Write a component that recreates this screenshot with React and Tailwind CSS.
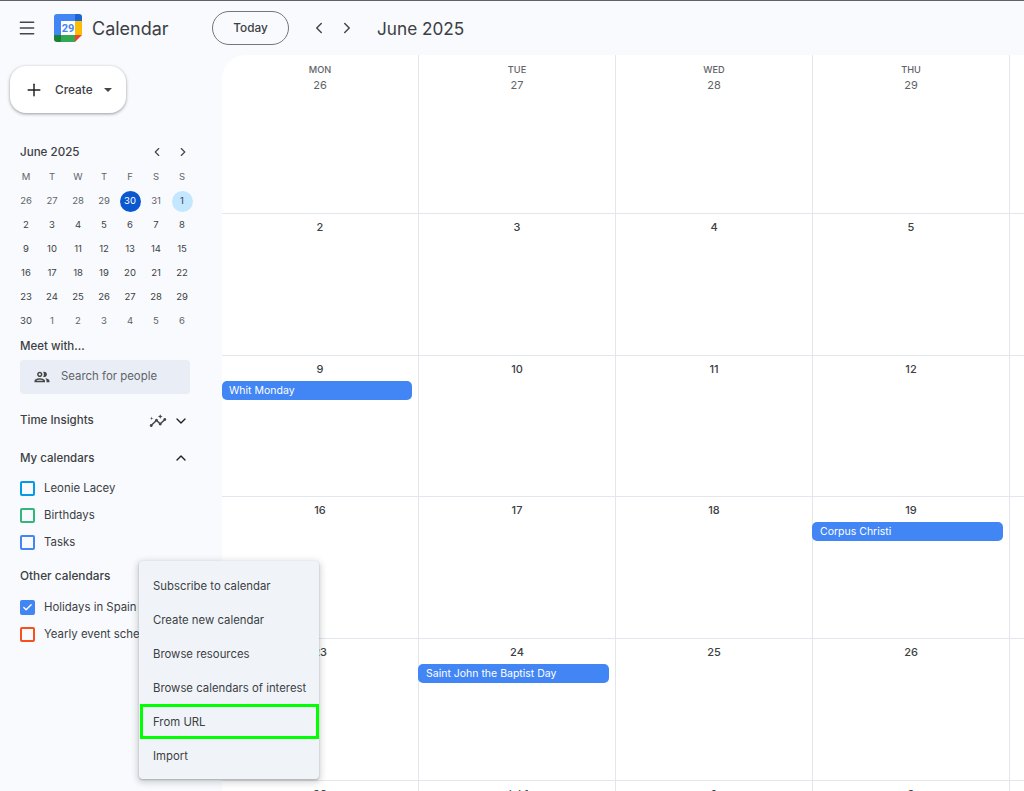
import { ChevronLeft, ChevronRight, ChevronDown, ChevronUp, Menu, Plus, Check } from 'lucide-react';

const miniDays = [
  ['26', '27', '28', '29', '30', '31', '1'],
  ['2', '3', '4', '5', '6', '7', '8'],
  ['9', '10', '11', '12', '13', '14', '15'],
  ['16', '17', '18', '19', '20', '21', '22'],
  ['23', '24', '25', '26', '27', '28', '29'],
  ['30', '1', '2', '3', '4', '5', '6'],
];

// the friday column only starts at the right edge, nothing of its text shows
const weeks = [
  [{ n: '26', head: 'MON' }, { n: '27', head: 'TUE' }, { n: '28', head: 'WED' }, { n: '29', head: 'THU' }, {}],
  [{ n: '2' }, { n: '3' }, { n: '4' }, { n: '5' }, {}],
  [{ n: '9', event: 'Whit Monday' }, { n: '10' }, { n: '11' }, { n: '12' }, {}],
  [{ n: '16' }, { n: '17' }, { n: '18' }, { n: '19', event: 'Corpus Christi' }, {}],
  [{ n: '23' }, { n: '24', event: 'Saint John the Baptist Day' }, { n: '25' }, { n: '26' }, {}],
  [{ n: '30' }, { n: 'Jul 1' }, { n: '2' }, { n: '3' }, {}],
];

const rowHeights = ['h-[159px]', 'h-[142px]', 'h-[141px]', 'h-[142px]', 'h-[142px]', 'h-[142px]'];

const menuItems = ['Subscribe to calendar', 'Create new calendar', 'Browse resources', 'Browse calendars of interest', 'From URL', 'Import'];

function Logo() {
  return (
    <svg width="28" height="28" viewBox="0 0 28 28">
      <path d="M3 0h18v7H7v14H0V3a3 3 0 0 1 3-3z" fill="#4285f4" />
      <path d="M21 0h4a3 3 0 0 1 3 3v4h-7z" fill="#1967d2" />
      <rect x="21" y="7" width="7" height="14" fill="#fbbc04" />
      <rect x="7" y="21" width="14" height="7" fill="#34a853" />
      <path d="M0 21h7v7H3a3 3 0 0 1-3-3z" fill="#188038" />
      <path d="M21 21h7l-7 7z" fill="#ea4335" />
      <rect x="7" y="7" width="14" height="14" fill="#fff" />
      <text x="14" y="18" textAnchor="middle" fontSize="11" fontWeight="700" fill="#4285f4" fontFamily="Roboto, sans-serif">29</text>
    </svg>
  );
}

function PeopleIcon() {
  return (
    <svg width="18" height="18" viewBox="0 0 24 24" fill="#444746">
      <path d="M9 13.75c-2.34 0-7 1.17-7 3.5V19h14v-1.750c0-2.330-4.660-3.500-7-3.500zM4.340 17c.84-.58 2.870-1.250 4.660-1.250s3.820.67 4.660 1.250H4.340zM9 12c1.930 0 3.500-1.570 3.500-3.500S10.930 5 9 5 5.500 6.570 5.500 8.500 7.070 12 9 12zm0-5c.83 0 1.500.67 1.500 1.500S9.830 10 9 10s-1.500-.67-1.500-1.500S8.170 7 9 7zm7.040 6.810c1.160.84 1.960 1.960 1.960 3.440V19h4v-1.750c0-2.020-3.500-3.170-5.960-3.440zM15 12c1.930 0 3.500-1.570 3.500-3.500S16.930 5 15 5c-.54 0-1.040.13-1.500.35.630.89 1 1.980 1 3.150s-.37 2.260-1 3.150c.46.22.96.35 1.500.35z" />
    </svg>
  );
}

function InsightsIcon() {
  return (
    <svg width="18" height="18" viewBox="0 0 24 24" fill="#444746">
      <path d="M21 8c-1.450 0-2.260 1.440-1.930 2.510l-3.550 3.560c-.3-.09-.74-.09-1.040 0l-2.550-2.550C12.270 10.450 11.460 9 10 9c-1.450 0-2.270 1.440-1.930 2.520l-4.560 4.550C2.440 15.740 1 16.550 1 18c0 1.100.9 2 2 2 1.450 0 2.260-1.440 1.930-2.510l4.550-4.560c.3.09.74.09 1.040 0l2.550 2.550C12.730 16.550 13.540 18 15 18c1.450 0 2.270-1.440 1.930-2.520l3.560-3.550c1.070.33 2.510-.48 2.510-1.930 0-1.100-.9-2-2-2z" />
      <path d="m15 9 .94-2.070L18 6l-2.060-.93L15 3l-.92 2.070L12 6l2.080.93zM3.500 11 4 9l2-.5L4 8l-.5-2L3 8l-2 .5L3 9z" />
    </svg>
  );
}

function CalendarRow({ label, border, checked }) {
  return (
    <div className="flex items-center h-[27px] pl-5">
      {checked ? (
        <span className="w-[15px] h-[15px] rounded-[2px] flex items-center justify-center bg-[#4285f4]">
          <Check size={11} color="#fff" strokeWidth={3} />
        </span>
      ) : (
        <span className={`w-[15px] h-[15px] rounded-[2px] border-2 ${border}`} />
      )}
      <span className="ml-[9px] text-[11.4px] text-[#3c4043] whitespace-nowrap">{label}</span>
    </div>
  );
}

function Sidebar() {
  return (
    <aside className="w-[222px] shrink-0 pt-[11px]">
      <button className="ml-[10px] w-[116px] h-[47px] bg-white rounded-2xl shadow-[0_1px_3px_1px_rgba(60,64,67,0.2),0_1px_2px_rgba(60,64,67,0.25)] flex items-center pl-[14px]">
        <Plus size={20} color="#1f1f1f" strokeWidth={1.75} />
        <span className="ml-[11px] pt-[2px] text-[11.8px] font-medium text-[#3c4043]">Create</span>
        <span className="ml-[11px] w-0 h-0 border-x-[4px] border-x-transparent border-t-[4px] border-t-[#444746]" />
      </button>

      <div className="mt-[28px] pl-5 pr-[32px] flex items-center justify-between h-[22px]">
        <span className="pt-px text-[11.6px] font-medium text-[#3c4043]">June 2025</span>
        <div className="flex items-center gap-[12px]">
          <ChevronLeft size={14} color="#444746" />
          <ChevronRight size={14} color="#444746" />
        </div>
      </div>

      <div className="mt-[2px] ml-[13px] w-[182px] grid grid-cols-7 text-[9.5px] text-[#3c4043]">
        {['M', 'T', 'W', 'T', 'F', 'S', 'S'].map((d, i) => (
          <div key={i} className="h-[24px] flex items-center justify-center text-[#5f6368]">{d}</div>
        ))}
        {miniDays.flat().map((d, i) => {
          // first row up to may 31 and the july days at the end are other months
          const otherMonth = i < 6 || i > 35;
          return (
            <div key={i} className={`h-[24px] flex items-center justify-center ${otherMonth ? 'text-[#5f6368]' : ''}`}>
              {i === 4 ? (
                <span className="w-[21px] h-[21px] rounded-full bg-[#0b57d0] text-white flex items-center justify-center">{d}</span>
              ) : i === 6 ? (
                <span className="w-[21px] h-[21px] rounded-full bg-[#c2e7ff] flex items-center justify-center">{d}</span>
              ) : (
                d
              )}
            </div>
          );
        })}
      </div>

      <div className="pl-5 mt-[5px] text-[11.5px] font-medium text-[#3c4043] h-[16px] leading-[16px]">Meet with...</div>
      <div className="ml-5 mt-[6px] w-[170px] h-[34px] bg-[#e9eef6] rounded-[4px] flex items-center pl-[13px]">
        <PeopleIcon />
        <span className="ml-[10px] text-[11.4px] text-[#5f6368]">Search for people</span>
      </div>

      <div className="mt-[16px] pl-5 pr-[33px] h-[22px] flex items-center justify-between">
        <span className="text-[11.5px] font-medium text-[#3c4043]">Time Insights</span>
        <div className="flex items-center gap-[6px]">
          <InsightsIcon />
          <ChevronDown size={16} color="#1f1f1f" />
        </div>
      </div>

      <div className="mt-[15px] pl-5 pr-[33px] h-[22px] flex items-center justify-between">
        <span className="pt-px text-[11.5px] font-medium text-[#3c4043]">My calendars</span>
        <ChevronUp size={16} color="#1f1f1f" />
      </div>

      <div className="mt-[6px]">
        <CalendarRow label="Leonie Lacey" border="border-[#039be5]" />
        <CalendarRow label="Birthdays" border="border-[#33b679]" />
        <CalendarRow label="Tasks" border="border-[#4285f4]" />
      </div>

      <div className="mt-[10px] pl-5 h-[22px] flex items-center text-[11.8px] font-medium text-[#3c4043]">Other calendars</div>

      <div className="mt-[6px]">
        <CalendarRow label="Holidays in Spain" checked />
        <CalendarRow label="Yearly event schedule" border="border-[#f4511e]" />
      </div>
    </aside>
  );
}

function DayCell({ day, height, first, muted }) {
  return (
    <div className={`w-[197px] shrink-0 border-r border-b border-[#e3e7ed] ${height} text-center`}>
      {day.head && <div className="pt-[8px] text-[9.2px] leading-[14px] font-medium text-[#5f6368]">{day.head}</div>}
      {day.n && (
        <div className={`text-[11px] leading-[16px] ${muted ? 'text-[#5f6368]' : 'font-medium text-[#3c4043]'} ${day.head ? '' : 'pt-[5px]'}`}>{day.n}</div>
      )}
      {day.event && (
        <div className={`mt-[4px] h-[19px] rounded-[5px] bg-[#4285f4] text-white text-[10.5px] leading-[19px] text-left pl-[7px] ${first ? 'w-[190px]' : 'w-[191px] -ml-px pl-[8px]'}`}>
          {day.event}
        </div>
      )}
    </div>
  );
}

function ContextMenu() {
  return (
    <div className="absolute left-[139px] top-[560px] w-[180px] h-[218px] bg-[#f0f4f9] rounded-[4px] shadow-[0_2px_6px_2px_rgba(60,64,67,0.2),0_1px_2px_rgba(60,64,67,0.3)] pt-[8px]">
      {menuItems.map((item) => (
        <div key={item} className="relative h-[34px] pt-[2px] flex items-center pl-[14px] text-[11.35px] text-[#3c4043] whitespace-nowrap">
          {item}
          {item === 'From URL' && <div className="absolute left-px right-0 -top-px bottom-0 border-[3px] border-[#00ff00]" />}
        </div>
      ))}
    </div>
  );
}

export default function App() {
  return (
    <div className="relative w-[1024px] h-[791px] overflow-hidden bg-[#f8fafd] border-t border-[#5f6368] flex flex-col font-['Inter','Liberation_Sans',sans-serif]">
      <header className="h-[54px] shrink-0 flex items-center">
        <div className="w-[54px] pl-[17px] flex items-center">
          <Menu size={20} color="#444746" strokeWidth={1.75} />
        </div>
        <Logo />
        <span className="ml-[10px] w-[120px] text-[18px] text-[#3c4043]">Calendar</span>
        <button className="w-[77px] h-[34px] pt-px rounded-full border border-[#747775] text-[11.8px] font-medium text-[#3c4043]">Today</button>
        <div className="ml-[21px] flex items-center gap-[10px]">
          <ChevronLeft size={18} color="#444746" />
          <ChevronRight size={18} color="#444746" />
        </div>
        <span className="ml-[21px] pt-px text-[17.2px] text-[#3c4043]">June 2025</span>
      </header>
      <div className="flex flex-1 min-h-0">
        <Sidebar />
        <main className="flex-1 min-w-0 bg-white rounded-tl-[24px] overflow-hidden">
          {weeks.map((week, i) => (
            <div key={i} className="flex">
              {week.map((day, j) => (
                <DayCell key={j} day={day} height={rowHeights[i]} first={j === 0} muted={i === 0} />
              ))}
            </div>
          ))}
        </main>
      </div>
      <ContextMenu />
    </div>
  );
}
